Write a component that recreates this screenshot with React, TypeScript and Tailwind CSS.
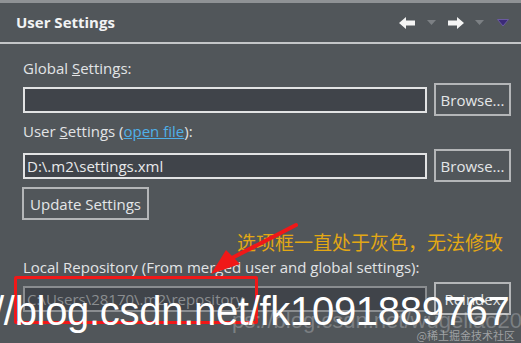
import React from "react";

function Btn({ children, className = "" }: { children: React.ReactNode; className?: string }) {
  return (
    <div
      className={
        "flex items-center justify-center h-[33px] border-2 border-[#b4b6b8] text-[#e4e6e8] text-[15px] " +
        className
      }
    >
      {children}
    </div>
  );
}

function Field({ value, dim = false }: { value?: string; dim?: boolean }) {
  return (
    <div
      className={
        "flex items-center w-[404px] h-[26px] px-[2px] border-2 bg-[#40444a] text-[15px] " +
        (dim ? "border-[#8a8d90] text-[#8a8d90]" : "border-[#e2e3e4] text-[#e8e9ea]")
      }
    >
      {value}
    </div>
  );
}

export default function App() {
  return (
    <div className="relative w-[521px] h-[343px] overflow-hidden bg-[#51565a] font-['Open_Sans','Noto_Sans_CJK_SC',sans-serif] select-none">
      {/* header */}
      <div className="flex items-center justify-between h-[44px] pl-4 pr-[12px] border-t-[3px] border-b-2 border-t-[#8f9295] border-b-[#c4c6c8]">
        <span className="text-[15px] font-bold text-[#f2f3f4]">User Settings</span>
        <div className="flex items-center gap-[11px]">
          <svg width="18" height="14" viewBox="0 0 18 14">
            <path d="M1 7 L8 1 L8 4.5 L17 4.5 L17 9.5 L8 9.5 L8 13 Z" fill="#f4f4f4" />
          </svg>
          <svg width="9" height="6" viewBox="0 0 9 6">
            <path d="M0 0 L9 0 L4.5 5 Z" fill="#7c8084" />
          </svg>
          <svg width="18" height="14" viewBox="0 0 18 14">
            <path d="M17 7 L10 1 L10 4.5 L1 4.5 L1 9.5 L10 9.5 L10 13 Z" fill="#f4f4f4" />
          </svg>
          <svg width="9" height="6" viewBox="0 0 9 6" className="-ml-[1px]">
            <path d="M0 0 L9 0 L4.5 5 Z" fill="#7c8084" />
          </svg>
          <svg width="12" height="8" viewBox="0 0 12 8" className="ml-[2px]">
            <path d="M0.5 0.5 L11.5 0.5 L6 7 Z" fill="#3b2a78" stroke="#6a5aa0" strokeWidth="1" />
          </svg>
        </div>
      </div>

      {/* body */}
      <div className="flex flex-col pl-[23px] pr-[10px] pt-[14px] text-[15px] text-[#e2e4e6] leading-[20px]">
        <div>
          Global <span className="underline">S</span>ettings:
        </div>
        <div className="flex items-center justify-between mt-[5px]">
          <Field />
          <Btn className="w-[77px]">Browse...</Btn>
        </div>

        <div className="mt-[5px]">
          User <span className="underline">S</span>ettings (
          <span className="text-[#4fb0e8] underline">open file</span>):
        </div>
        <div className="flex items-center justify-between mt-[8px]">
          <Field value="D:\.m2\settings.xml" />
          <Btn className="w-[77px]">Browse...</Btn>
        </div>

        <Btn className="w-[127px] mt-[5px] -ml-[1px]">Update Settings</Btn>

        <div className="mt-[37px]">Local Repository (From merged user and global settings):</div>
        <div className="flex items-center justify-between mt-[5px]">
          <Field value="C:\Users\28170\.m2\repository" dim />
          <Btn className="w-[77px] border-[#8a8d90] text-[#9a9da0]">Reindex</Btn>
        </div>
      </div>

      {/* annotation */}
      <div className="absolute left-[237px] top-[231px] text-[19px] text-[#e3a814] leading-[22px] font-['Noto_Sans_CJK_SC',sans-serif]">
        选项框一直处于灰色，无法修改
      </div>
      <div className="absolute left-[14px] top-[276px] w-[244px] h-[48px] border-[3px] border-[#f01818] rounded-[2px]" />
      <svg className="absolute left-0 top-0" width="521" height="343" viewBox="0 0 521 343">
        <path d="M296 225 L232 258" stroke="#f01818" strokeWidth="4" strokeLinecap="round" />
        <path d="M211 274 L226 250 L240 264 Z" fill="#f01818" />
      </svg>

      {/* watermarks */}
      <div className="absolute left-[232px] top-[308px] text-[22px] leading-[26px] text-white/25 font-['Liberation_Sans',sans-serif] whitespace-nowrap">
        ps://blog.csdn.net/wugeliao20
      </div>
      <div className="absolute right-[6px] bottom-[1px] text-[11px] leading-[14px] text-white/45 font-['Noto_Sans_CJK_SC',sans-serif]">
        @稀土掘金技术社区
      </div>
      <div className="absolute -left-[7px] top-[286px] text-[40px] leading-[50px] text-white font-['Liberation_Sans',sans-serif] whitespace-nowrap tracking-[-0.3px]">
        //blog.csdn.net/fk1091889767
      </div>
    </div>
  );
}
